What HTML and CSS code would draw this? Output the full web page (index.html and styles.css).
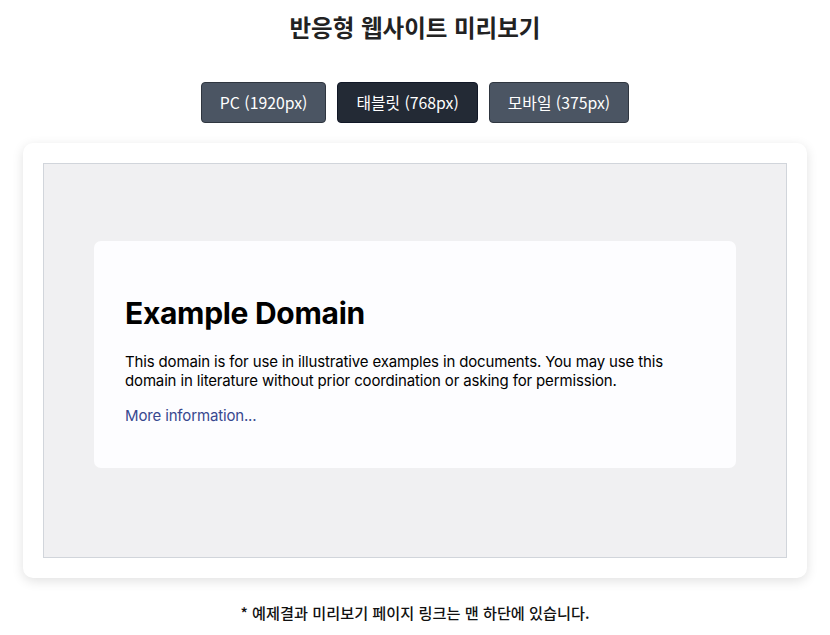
FILE: index.html
```html
<!DOCTYPE html>
<html lang="ko">
<head>
<meta charset="utf-8">
<title>반응형 웹사이트 미리보기</title>
<link rel="stylesheet" href="styles.css">
</head>
<body>
<h1 class="title">반응형 웹사이트 미리보기</h1>
<div class="tabs">
  <button class="tab">PC (1920px)</button>
  <button class="tab tab-active">태블릿 (768px)</button>
  <button class="tab">모바일 (375px)</button>
</div>
<div class="card">
  <div class="frame">
    <div class="example">
      <h2 class="ex-title">Example Domain</h2>
      <p class="ex-text">This domain is for use in illustrative examples in documents. You may use this domain in literature without prior coordination or asking for permission.</p>
      <p class="ex-text"><a class="ex-link" href="#">More information...</a></p>
    </div>
  </div>
</div>
<p class="note">* 예제결과 미리보기 페이지 링크는 맨 하단에 있습니다.</p>
</body>
</html>
```

FILE: styles.css
```css
* { box-sizing: border-box; }
html, body { margin: 0; padding: 0; background: #ffffff; }
body {
  font-family: "Noto Sans CJK KR", "Noto Sans", sans-serif;
  color: #222;
  padding: 0 23px 0 23px;
}
.title {
  margin: 0;
  padding-top: 10px;
  height: 82px;
  text-align: center;
  font-size: 23.5px;
  font-weight: 700;
  line-height: 34px;
  color: #222;
}
.tabs {
  display: flex;
  justify-content: center;
  gap: 11px;
}
.tab {
  height: 41px;
  padding: 0 18px;
  border: 1px solid #2f3640;
  border-radius: 4px;
  background: #4b5563;
  color: #fff;
  font-family: "Noto Sans CJK KR", "Noto Sans", sans-serif;
  font-size: 15.8px;
  font-weight: 400;
  line-height: 1;
}
.tab-active { background: #232a35; border-color: #111827; }
.card {
  margin-top: 20px;
  height: 435px;
  padding: 20px;
  background: #fff;
  border-radius: 10px;
  box-shadow: 0 3px 12px rgba(0,0,0,0.12);
}
.frame {
  height: 395px;
  border: 1px solid #d1d5db;
  background: #f0f0f2;
  padding-top: 77px;
}
.example {
  width: 642px;
  margin: 0 auto;
  padding: 31px;
  background: #fdfdff;
  border-radius: 7px;
  font-family: Inter, "Liberation Sans", sans-serif;
  color: #000;
}
.ex-title {
  margin: 23px 0 21px;
  font-size: 30px;
  font-weight: 700;
  line-height: 36px;
  letter-spacing: -0.3px;
}
.ex-text {
  margin: 0 0 16px;
  font-size: 15px;
  line-height: 19px;
  letter-spacing: -0.15px;
}
.ex-text:last-child { margin-bottom: 12px; }
.ex-link { color: #38488f; text-decoration: none; }
.note {
  margin: 20px 0 0;
  text-align: center;
  font-size: 15.2px;
  font-weight: 500;
  line-height: 28px;
  color: #111;
}
```
